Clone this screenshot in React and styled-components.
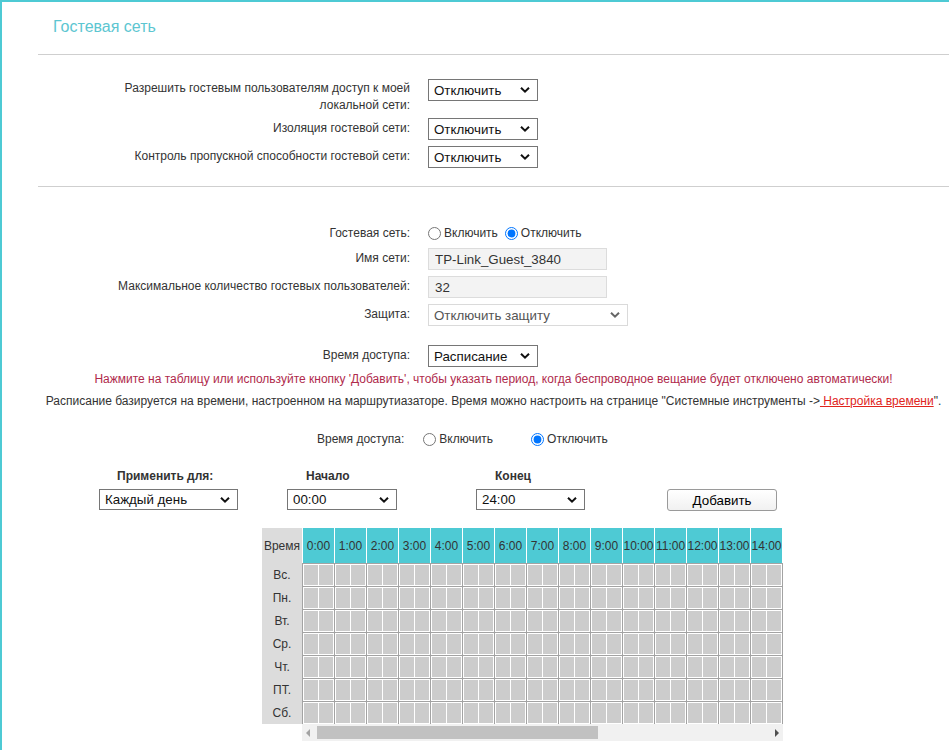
import React from 'react';
import styled, { createGlobalStyle } from 'styled-components';

const GlobalStyle = createGlobalStyle`
  html, body {
    margin: 0;
    padding: 0;
    background: #fff;
  }
  body {
    font-family: 'Liberation Sans', Arial, sans-serif;
    font-size: 12px;
    color: #333;
  }
`;

const TEAL = '#4ecad4';
// only the columns that fit in the scroll viewport are drawn
const HOURS = Array.from({ length: 15 }, (_, i) => `${i}:00`);
const DAYS = ['Вс.', 'Пн.', 'Вт.', 'Ср.', 'Чт.', 'ПТ.', 'Сб.'];

const Page = styled.div`
  min-height: 100vh;
  border-top: 2px solid ${TEAL};
  border-left: 2px solid ${TEAL};
  box-sizing: border-box;
  overflow: hidden;
`;

const Title = styled.h1`
  margin: 0;
  padding: 15px 0 0 51px;
  height: 37px;
  font-size: 16px;
  line-height: 20px;
  font-weight: normal;
  color: #5cc6d1;
`;

const Divider = styled.hr`
  margin: 0 0 0 36px;
  border: none;
  border-top: 1px solid #cfcfcf;
`;

const Form = styled.div`
  display: flex;
  flex-direction: column;
  gap: 6px;
  padding: ${p => p.$pad};
`;

const Row = styled.div`
  display: grid;
  grid-template-columns: 295px auto;
  column-gap: 18px;
  align-items: start;
  margin-left: 113px;
  margin-top: ${p => p.$extra || 0}px;
`;

const Label = styled.div`
  text-align: right;
  line-height: 17px;
  padding-top: ${p => p.$top ?? 2}px;
`;

const SelectBox = styled.div`
  position: relative;
  width: ${p => p.$w}px;
  height: ${p => p.$h || 22}px;
`;

const NativeSelect = styled.select`
  appearance: none;
  width: 100%;
  height: 100%;
  margin: 0;
  box-sizing: border-box;
  border: 1px solid ${p => (p.$light ? '#dadada' : '#767676')};
  border-radius: 0;
  background: #fff;
  font-family: 'Liberation Sans', Arial, sans-serif;
  font-size: 13.33px;
  font-weight: 400;
  color: ${p => (p.$light ? '#555' : '#111')};
  padding: 0 20px 0 5px;
  outline: none;
`;

const Chevron = styled.svg`
  position: absolute;
  right: 8px;
  top: 50%;
  transform: translateY(-50%);
  pointer-events: none;
`;

const Select = ({ w, h, light, value }) => (
  <SelectBox $w={w} $h={h}>
    <NativeSelect $light={light} defaultValue={value}>
      <option>{value}</option>
    </NativeSelect>
    <Chevron width="10" height="7" viewBox="0 0 10 7">
      <path d="M1 1.2 L5 5.2 L9 1.2" fill="none" stroke={light ? '#666' : '#111'} strokeWidth="2" />
    </Chevron>
  </SelectBox>
);

const TextInput = styled.input`
  width: 179px;
  height: 22px;
  margin: 0;
  box-sizing: border-box;
  border: 1px solid #dcdcdc;
  background: #f3f3f3;
  font-family: 'Liberation Sans', Arial, sans-serif;
  font-size: 13.33px;
  color: #333;
  padding: 0 6px;
  outline: none;
`;

const RadioGroup = styled.div`
  display: flex;
  align-items: center;
  gap: ${p => p.$gap}px;
  height: ${p => p.$h || 20}px;
`;

const RadioLabel = styled.label`
  display: flex;
  align-items: center;
  gap: 3px;
  line-height: 17px;

  input {
    margin: 0;
    width: 13px;
    height: 13px;
  }
`;

const Notice = styled.p`
  margin: ${p => p.$mt}px 0 0 36px;
  text-align: center;
  line-height: 17px;
  white-space: nowrap;
  color: ${p => (p.$red ? '#b02a4c' : '#333')};
`;

const TimeLink = styled.a`
  color: #e0241c;
  text-decoration: underline;
  cursor: pointer;
`;

const AccessRow = styled.div`
  display: flex;
  align-items: center;
  gap: 19px;
  margin: 19px 0 0 315px;
  height: 20px;
`;

const RangeGrid = styled.div`
  display: grid;
  grid-template-columns: 188px 189px 191px 110px;
  margin: 19px 0 0 97px;
`;

const RangeCol = styled.div`
  display: flex;
  flex-direction: column;
  gap: 4px;
`;

const RangeLabel = styled.div`
  font-weight: bold;
  line-height: 17px;
  padding-left: ${p => p.$pl}px;
  min-height: 17px;
`;

const AddButton = styled.button`
  width: 110px;
  height: 22px;
  margin: 0;
  border: 1px solid #9a9a9a;
  border-radius: 3px;
  background: linear-gradient(#ffffff, #f1f1f1);
  font-family: 'Liberation Sans', Arial, sans-serif;
  font-size: 13.33px;
  color: #000;
  cursor: pointer;
`;

const Schedule = styled.div`
  display: flex;
  margin: 17px 0 0 260px;
`;

const DayColumn = styled.div`
  width: 40px;
  display: flex;
  flex-direction: column;
  align-self: flex-start;
  background: #dcdcdc;
`;

const DayCell = styled.div`
  height: ${p => (p.$head ? 35 : 23)}px;
  display: flex;
  align-items: center;
  justify-content: center;
  color: #333;
`;

const ScrollArea = styled.div`
  width: 481px;
  display: flex;
  flex-direction: column;
`;

const Viewport = styled.div`
  overflow: hidden;
  width: 481px;
`;

const GridRow = styled.div`
  display: flex;
  width: 481px;
  box-sizing: border-box;
  border-right: 1px solid ${p => (p.$head ? '#fff' : '#a3a3a3')};
`;

const HourHead = styled.div`
  width: 32px;
  height: 35px;
  box-sizing: border-box;
  flex-shrink: 0;
  border-left: 1px solid #fff;
  background: ${TEAL};
  display: flex;
  align-items: center;
  justify-content: center;
  color: #333;
`;

const HourCell = styled.div`
  width: 32px;
  height: 23px;
  box-sizing: border-box;
  flex-shrink: 0;
  display: flex;
  gap: 1px;
  padding: 1px;
  background: #fff;
  border-left: 1px solid #a3a3a3;
  border-top: 1px solid #a3a3a3;
`;

const HalfCell = styled.div`
  flex: 1;
  background: #cccccc;
  cursor: pointer;
`;

const ScrollBar = styled.div`
  height: 17px;
  background: #f1f1f1;
  display: flex;
  align-items: center;
  justify-content: space-between;
  position: relative;
`;

const Thumb = styled.div`
  position: absolute;
  left: 15px;
  top: 2px;
  width: 281px;
  height: 13px;
  background: #c1c1c1;
`;

const Arrow = styled.svg`
  margin: 0 4px;
`;

export default function App() {
  return (
    <>
      <GlobalStyle />
      <Page>
        <Title>Гостевая сеть</Title>
        <Divider />

        <Form $pad="24px 0 18px">
          <Row>
            <Label $top={1}>Разрешить гостевым пользователям доступ к моей локальной сети:</Label>
            <Select w={110} value="Отключить" />
          </Row>
          <Row $extra={-2}>
            <Label>Изоляция гостевой сети:</Label>
            <Select w={110} value="Отключить" />
          </Row>
          <Row>
            <Label>Контроль пропускной способности гостевой сети:</Label>
            <Select w={110} value="Отключить" />
          </Row>
        </Form>
        <Divider />

        <Form $pad="37px 0 0">
          <Row>
            <Label $top={1}>Гостевая сеть:</Label>
            <RadioGroup $gap={7} $h={18}>
              <RadioLabel>
                <input type="radio" name="guest" />
                Включить
              </RadioLabel>
              <RadioLabel>
                <input type="radio" name="guest" defaultChecked />
                Отключить
              </RadioLabel>
            </RadioGroup>
          </Row>
          <Row>
            <Label>Имя сети:</Label>
            <TextInput defaultValue="TP-Link_Guest_3840" />
          </Row>
          <Row>
            <Label>Максимальное количество гостевых пользователей:</Label>
            <TextInput defaultValue="32" />
          </Row>
          <Row>
            <Label>Защита:</Label>
            <Select w={200} light value="Отключить защиту" />
          </Row>
          <Row $extra={13}>
            <Label>Время доступа:</Label>
            <Select w={110} value="Расписание" />
          </Row>
        </Form>

        <Notice $red $mt={4}>
          Нажмите на таблицу или используйте кнопку 'Добавить', чтобы указать период, когда беспроводное вещание будет
          отключено автоматически!
        </Notice>
        <Notice $mt={5}>
          Расписание базируется на времени, настроенном на маршрутиазаторе. Время можно настроить на странице
          "Системные инструменты -&gt;<TimeLink> Настройка времени</TimeLink>".
        </Notice>

        <AccessRow>
          <span>Время доступа:</span>
          <RadioGroup $gap={38}>
            <RadioLabel>
              <input type="radio" name="access" />
              Включить
            </RadioLabel>
            <RadioLabel>
              <input type="radio" name="access" defaultChecked />
              Отключить
            </RadioLabel>
          </RadioGroup>
        </AccessRow>

        <RangeGrid>
          <RangeCol>
            <RangeLabel $pl={18}>Применить для:</RangeLabel>
            <Select w={139} h={21} value="Каждый день" />
          </RangeCol>
          <RangeCol>
            <RangeLabel $pl={19}>Начало</RangeLabel>
            <Select w={110} h={21} value="00:00" />
          </RangeCol>
          <RangeCol>
            <RangeLabel $pl={19}>Конец</RangeLabel>
            <Select w={109} h={21} value="24:00" />
          </RangeCol>
          <RangeCol>
            <RangeLabel $pl={0} />
            <AddButton>Добавить</AddButton>
          </RangeCol>
        </RangeGrid>

        <Schedule>
          <DayColumn>
            <DayCell $head>Время</DayCell>
            {DAYS.map(d => (
              <DayCell key={d}>{d}</DayCell>
            ))}
          </DayColumn>
          <ScrollArea>
            <Viewport>
              <GridRow $head>
                {HOURS.map(h => (
                  <HourHead key={h}>{h}</HourHead>
                ))}
              </GridRow>
              {DAYS.map(d => (
                <GridRow key={d}>
                  {HOURS.map(h => (
                    <HourCell key={h}>
                      <HalfCell />
                      <HalfCell />
                    </HourCell>
                  ))}
                </GridRow>
              ))}
            </Viewport>
            <ScrollBar>
              <Arrow width="4" height="8" viewBox="0 0 4 8">
                <polygon points="4,0 0,4 4,8" fill="#a3a3a3" />
              </Arrow>
              <Thumb />
              <Arrow width="4" height="8" viewBox="0 0 4 8">
                <polygon points="0,0 4,4 0,8" fill="#505050" />
              </Arrow>
            </ScrollBar>
          </ScrollArea>
        </Schedule>
      </Page>
    </>
  );
}
